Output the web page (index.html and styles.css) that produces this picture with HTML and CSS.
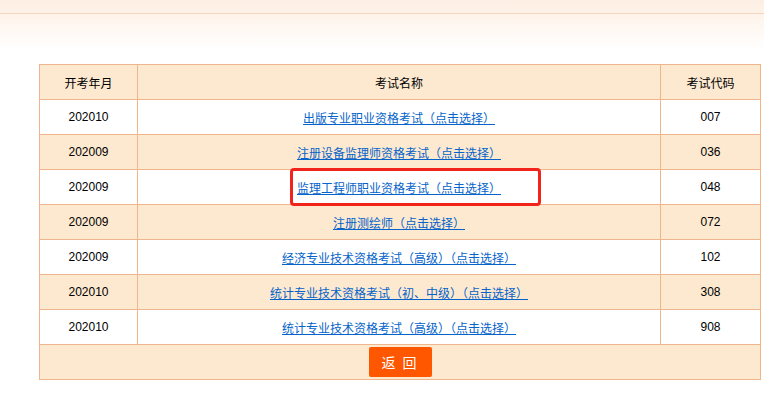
FILE: index.html
```html
<!DOCTYPE html>
<html lang="zh-CN">
<head>
    <meta charset="UTF-8">
    <meta name="viewport" content="width=device-width, initial-scale=1.0">
    <title>选择考试</title>
    <link rel="stylesheet" href="styles.css">
</head>
<body>

    <div class="top-band"></div>

    <table class="exam-table">
        <colgroup>
            <col class="col-date">
            <col class="col-name">
            <col class="col-code">
        </colgroup>
        <tr class="head">
            <th>开考年月</th>
            <th>考试名称</th>
            <th>考试代码</th>
        </tr>
        <tr>
            <td>202010</td>
            <td><a href="#">出版专业职业资格考试（点击选择）</a></td>
            <td>007</td>
        </tr>
        <tr class="alt">
            <td>202009</td>
            <td><a href="#">注册设备监理师资格考试（点击选择）</a></td>
            <td>036</td>
        </tr>
        <tr>
            <td>202009</td>
            <td class="marked">
                <a href="#">监理工程师职业资格考试（点击选择）</a>
                <span class="mark-box"></span>
            </td>
            <td>048</td>
        </tr>
        <tr class="alt">
            <td>202009</td>
            <td><a href="#">注册测绘师（点击选择）</a></td>
            <td>072</td>
        </tr>
        <tr>
            <td>202009</td>
            <td><a href="#">经济专业技术资格考试（高级）（点击选择）</a></td>
            <td>102</td>
        </tr>
        <tr class="alt">
            <td>202010</td>
            <td><a href="#">统计专业技术资格考试（初、中级）（点击选择）</a></td>
            <td>308</td>
        </tr>
        <tr>
            <td>202010</td>
            <td><a href="#">统计专业技术资格考试（高级）（点击选择）</a></td>
            <td>908</td>
        </tr>
        <tr class="foot">
            <td colspan="3"><button type="button" class="back-btn">返 回</button></td>
        </tr>
    </table>

</body>
</html>
```

FILE: styles.css
```css
/* General Styles */
body {
    margin: 0;
    font-family: "Liberation Sans", "Noto Sans CJK SC", sans-serif;
    font-size: 12px;
    color: #000;
    background: #fff;
}

/* Peach band along the top */
.top-band {
    height: 13px;
    background: linear-gradient(to bottom, #fdeee3, #fef2e8);
    border-bottom: 1px solid #f3d6bf;
}

.top-band::after {
    content: "";
    display: block;
    position: relative;
    top: 14px;
    height: 36px;
    background: linear-gradient(to bottom, #fef3ea, #ffffff);
}

/* Exam list */
.exam-table {
    margin: 50px 0 0 39px;
    width: 722px;
    border-collapse: collapse;
    border: 1px solid #efb58b;
    table-layout: fixed;
}

.col-date { width: 98px; }
.col-code { width: 100px; }

.exam-table th,
.exam-table td {
    height: 34px;
    padding: 0;
    border: 1px solid #efb58b;
    text-align: center;
    font-weight: normal;
}

.exam-table .head,
.exam-table .alt,
.exam-table .foot {
    background: #fde9d0;
}

.exam-table a {
    color: #0563c9;
    text-decoration: underline;
}

/* Highlighted row */
.marked {
    position: relative;
}

.mark-box {
    position: absolute;
    left: 152px;
    top: -2px;
    width: 251px;
    height: 38px;
    box-sizing: border-box;
    border: 3px solid #f2231b;
    border-radius: 4px;
}

/* Back button */
.back-btn {
    width: 63px;
    height: 30px;
    padding: 0;
    border: none;
    border-radius: 2px;
    background: #ff5600;
    color: #fff;
    font-family: "Noto Sans CJK SC", sans-serif;
    font-size: 14px;
    letter-spacing: 2px;
    cursor: pointer;
}
```
